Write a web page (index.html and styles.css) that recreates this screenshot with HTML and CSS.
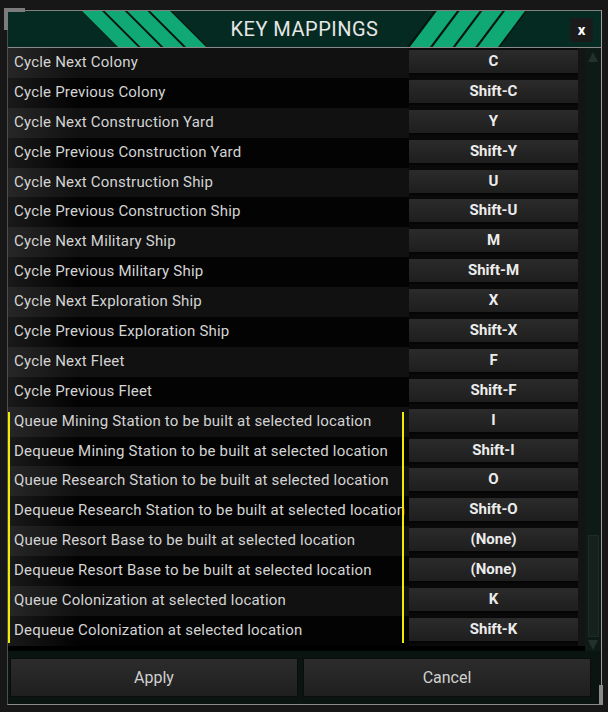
FILE: index.html
```html
<!DOCTYPE html>
<html>
<head>
<meta charset="utf-8">
<link rel="stylesheet" href="styles.css">
</head>
<body>
<div class="window">
  <span class="corner tl"></span>
  <span class="corner br"></span>
  <div class="titlebar">
    <svg class="stripes" viewBox="8 11 593 36" preserveAspectRatio="none">
      <polygon points="81,11 172,11 208,47 117,47" fill="#02160f"/>
      <polygon points="82,11 102,11 138,47 118,47" fill="#10a874"/>
      <polygon points="104.7,11 124.7,11 160.7,47 140.7,47" fill="#10a874"/>
      <polygon points="127.4,11 147.4,11 183.4,47 163.4,47" fill="#10a874"/>
      <polygon points="150.1,11 170.1,11 206.1,47 186.1,47" fill="#10a874"/>
      <polygon points="434,11 527,11 500,47 407,47" fill="#02160f"/>
      <polygon points="505,11 525,11 498,47 478,47" fill="#10a874"/>
      <polygon points="482.3,11 502.3,11 475.3,47 455.3,47" fill="#10a874"/>
      <polygon points="459.6,11 479.6,11 452.6,47 432.6,47" fill="#10a874"/>
      <polygon points="436.9,11 456.9,11 429.9,47 409.9,47" fill="#10a874"/>
    </svg>
    <h1 class="title">KEY MAPPINGS</h1>
    <button class="close">x</button>
  </div>
  <div class="list">
    <div class="rows">
      <div class="row alt"><div class="label">Cycle Next Colony</div><div class="key"><span>C</span></div></div>
      <div class="row"><div class="label">Cycle Previous Colony</div><div class="key"><span>Shift-C</span></div></div>
      <div class="row alt"><div class="label">Cycle Next Construction Yard</div><div class="key"><span>Y</span></div></div>
      <div class="row"><div class="label">Cycle Previous Construction Yard</div><div class="key"><span>Shift-Y</span></div></div>
      <div class="row alt"><div class="label">Cycle Next Construction Ship</div><div class="key"><span>U</span></div></div>
      <div class="row"><div class="label">Cycle Previous Construction Ship</div><div class="key"><span>Shift-U</span></div></div>
      <div class="row alt"><div class="label">Cycle Next Military Ship</div><div class="key"><span>M</span></div></div>
      <div class="row"><div class="label">Cycle Previous Military Ship</div><div class="key"><span>Shift-M</span></div></div>
      <div class="row alt"><div class="label">Cycle Next Exploration Ship</div><div class="key"><span>X</span></div></div>
      <div class="row"><div class="label">Cycle Previous Exploration Ship</div><div class="key"><span>Shift-X</span></div></div>
      <div class="row alt"><div class="label">Cycle Next Fleet</div><div class="key"><span>F</span></div></div>
      <div class="row"><div class="label">Cycle Previous Fleet</div><div class="key"><span>Shift-F</span></div></div>
      <div class="group">
        <div class="row alt"><div class="label">Queue Mining Station to be built at selected location</div><div class="key"><span>I</span></div></div>
        <div class="row"><div class="label">Dequeue Mining Station to be built at selected location</div><div class="key"><span>Shift-I</span></div></div>
        <div class="row alt"><div class="label">Queue Research Station to be built at selected location</div><div class="key"><span>O</span></div></div>
        <div class="row"><div class="label">Dequeue Research Station to be built at selected location</div><div class="key"><span>Shift-O</span></div></div>
        <div class="row alt"><div class="label">Queue Resort Base to be built at selected location</div><div class="key"><span>(None)</span></div></div>
        <div class="row"><div class="label">Dequeue Resort Base to be built at selected location</div><div class="key"><span>(None)</span></div></div>
        <div class="row alt"><div class="label">Queue Colonization at selected location</div><div class="key"><span>K</span></div></div>
        <div class="row"><div class="label">Dequeue Colonization at selected location</div><div class="key"><span>Shift-K</span></div></div>
      </div>
    </div>
    <div class="scrollbar">
      <span class="arrow up"></span>
      <span class="thumb"></span>
      <span class="arrow down"></span>
    </div>
  </div>
  <div class="footer">
    <button class="btn">Apply</button>
    <button class="btn">Cancel</button>
  </div>
</div>
</body>
</html>
```

FILE: styles.css
```css
body {
  margin: 0;
  background: #171717;
  font-family: Roboto, "Liberation Sans", sans-serif;
}

.window {
  position: relative;
  margin: 10px 0 0 7px;
  width: 593px;
  border-left: 1px solid #4d4d4d;
  border-right: 1px solid #9c9c9c;
  border-bottom: 1px solid #8c8c8c;
  background: #000;
}

.corner {
  position: absolute;
  z-index: 3;
}

.corner.tl {
  left: -4px;
  top: -2px;
  width: 17px;
  height: 18px;
  border-top: 4px solid #7c7c7c;
  border-left: 4px solid #7c7c7c;
}

.corner.br {
  right: -2px;
  bottom: -3px;
  width: 17px;
  height: 19px;
  border-right: 4px solid #8a8a8a;
  border-bottom: 3px solid #8a8a8a;
}

.titlebar {
  position: relative;
  height: 36px;
  border-top: 1px solid #808080;
  border-bottom: 1px solid #8a8a8a;
  background: #052a21;
  display: flex;
  align-items: center;
  justify-content: center;
}

.stripes {
  position: absolute;
  left: 0;
  top: 0;
  width: 100%;
  height: 100%;
}

.title {
  position: relative;
  margin: 0;
  font-weight: 400;
  font-size: 20px;
  color: #e6e6e6;
  letter-spacing: 0.5px;
}

.close {
  position: absolute;
  right: 8px;
  top: 7px;
  width: 23px;
  height: 24px;
  padding: 0;
  border: 0;
  background: #1b1b1b;
  color: #fff;
  font-family: Roboto, "Liberation Sans", sans-serif;
  font-weight: 700;
  font-size: 15px;
  line-height: 22px;
}

.list {
  display: flex;
  background: #000;
}

.rows {
  flex: 1;
  padding-bottom: 5px;
}

.row {
  display: flex;
  height: 29.9px;
}

.label {
  flex: 1;
  padding-left: 6px;
  line-height: 28.5px;
  font-size: 15px;
  letter-spacing: 0.2px;
  color: #d4d4d4;
  white-space: nowrap;
  background: linear-gradient(to right, rgba(255,255,255,0.09), rgba(255,255,255,0) 70px), #030303;
}

.row.alt .label {
  background: linear-gradient(to right, rgba(255,255,255,0.09), rgba(255,255,255,0) 70px), #111111;
}

.key {
  width: 176px;
  box-sizing: border-box;
  padding: 2px 7px 4px 0;
  background: linear-gradient(to right, #090909 169px, #141414 169px);
}

.key span {
  display: block;
  height: 23px;
  line-height: 22px;
  text-align: center;
  font-weight: 700;
  font-size: 15px;
  color: #ececec;
  background: linear-gradient(#2b2b2b, #1e1e1e);
  box-shadow: 0 2px 0 #050505;
}

.group {
  position: relative;
}

.group::before,
.group::after {
  content: "";
  position: absolute;
  top: 5px;
  bottom: 3px;
  width: 2px;
  background: #f2ea00;
}

.group::before {
  left: 0;
}

.group::after {
  left: 394px;
}

.scrollbar {
  width: 16px;
  background: #0d1a16;
  display: flex;
  flex-direction: column;
  align-items: center;
}

.arrow {
  width: 0;
  height: 0;
  border-left: 5px solid transparent;
  border-right: 5px solid transparent;
}

.arrow.up {
  margin-top: 4px;
  border-bottom: 10px solid #23302c;
}

.arrow.down {
  margin: 3px 0 1px;
  border-top: 10px solid #23302c;
}

.thumb {
  margin-top: auto;
  width: 11px;
  height: 102px;
  box-sizing: border-box;
  background: #16201d;
  border: 1px solid #1f2b27;
}

.footer {
  display: flex;
  gap: 7px;
  padding: 8px 11px 8px 3px;
  background: #0a1512;
}

.btn {
  flex: 1;
  height: 37px;
  border: 0;
  background: linear-gradient(#2c2c2c, #1f1f1f);
  box-shadow: 0 0 0 1px #0c0c0c;
  color: #d0d0d0;
  font-family: Roboto, "Liberation Sans", sans-serif;
  font-size: 16px;
}
```
